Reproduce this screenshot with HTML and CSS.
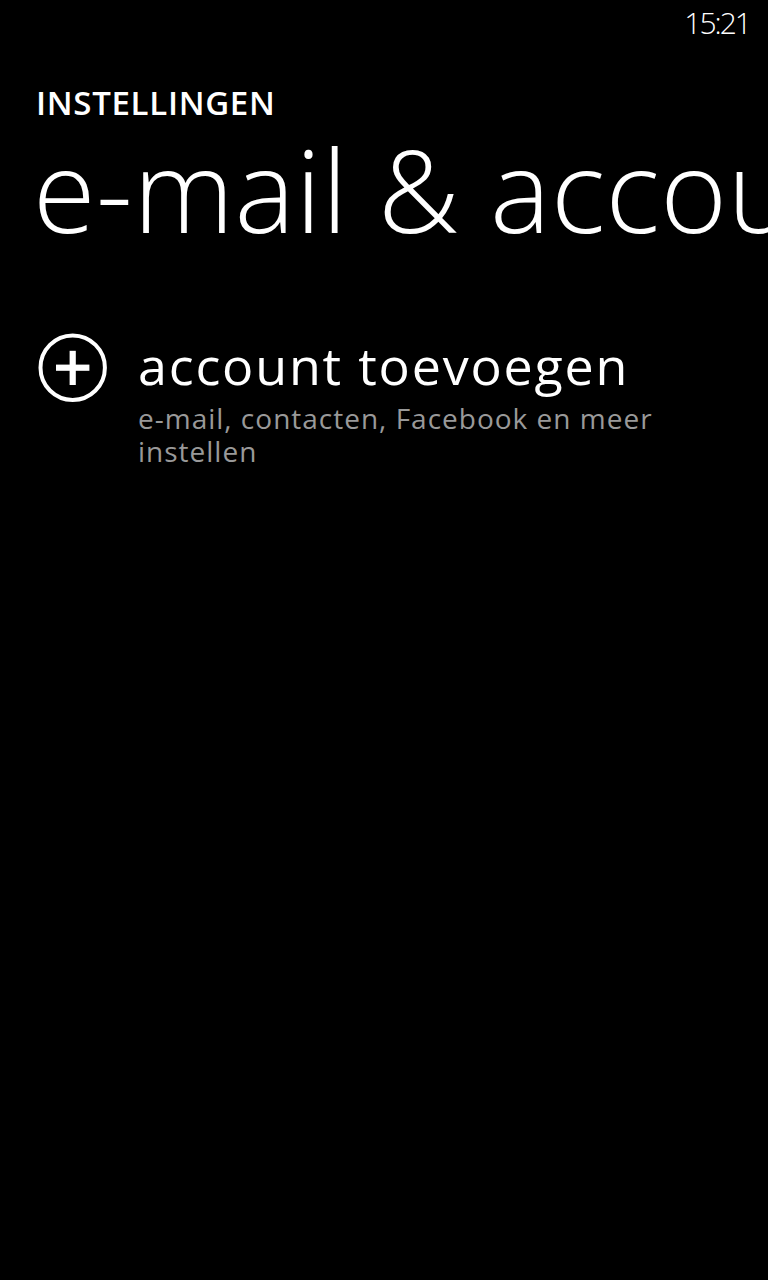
FILE: index.html
```html
<!DOCTYPE html>
<html lang="nl">
<head>
<meta charset="utf-8">
<title>e-mail &amp; accounts</title>
<link rel="stylesheet" href="styles.css">
</head>
<body>
<div class="phone">
  <div class="statusbar"><span class="time">15:21</span></div>
  <div class="header">
    <div class="app-title">INSTELLINGEN</div>
    <div class="page-title">e-mail &amp; accounts</div>
  </div>
  <div class="list">
    <div class="item">
      <svg class="item-icon" width="70" height="70" viewBox="0 0 70 70" aria-hidden="true">
        <circle cx="34.7" cy="34.7" r="32.2" fill="none" stroke="#fff" stroke-width="4"/>
        <rect x="18" y="31.6" width="33.4" height="6.2" fill="#fff"/>
        <rect x="31.6" y="17.8" width="6.2" height="34.2" fill="#fff"/>
      </svg>
      <div class="item-text">
        <div class="item-title">account toevoegen</div>
        <div class="item-sub">e-mail, contacten, Facebook en meer instellen</div>
      </div>
    </div>
  </div>
</div>
</body>
</html>
```
FILE: styles.css
```css
html, body {
  margin: 0;
  padding: 0;
  background: #000;
}
.phone {
  width: 768px;
  height: 1280px;
  overflow: hidden;
  background: #000;
  color: #fff;
  font-family: "Open Sans", "Noto Sans", sans-serif;
}
.statusbar {
  height: 50px;
  display: flex;
  justify-content: flex-end;
  align-items: flex-start;
  padding-right: 18px;
}
.time {
  font-size: 30px;
  font-weight: 300;
  letter-spacing: -2px;
  line-height: 1;
  margin-top: 8px;
}
.header {
  padding-left: 36px;
  white-space: nowrap;
}
.app-title {
  font-size: 33px;
  font-weight: 600;
  letter-spacing: 0.7px;
  line-height: 1;
  margin-top: 36px;
}
.page-title {
  font-size: 114px;
  font-weight: 300;
  letter-spacing: 0.5px;
  line-height: 1;
  margin-top: 13px;
  margin-left: -3px;
}
.list {
  padding-left: 38px;
  margin-top: 87px;
}
.item {
  display: flex;
  align-items: flex-start;
  gap: 30px;
}
.item-icon {
  flex: none;
}
.item-text {
  width: 580px;
  padding-top: 6px;
}
.item-title {
  font-size: 52px;
  font-weight: 400;
  letter-spacing: 1.8px;
  line-height: 1;
}
.item-sub {
  font-size: 28px;
  color: #999;
  letter-spacing: 1px;
  line-height: 33px;
  margin-top: 11px;
}
```
